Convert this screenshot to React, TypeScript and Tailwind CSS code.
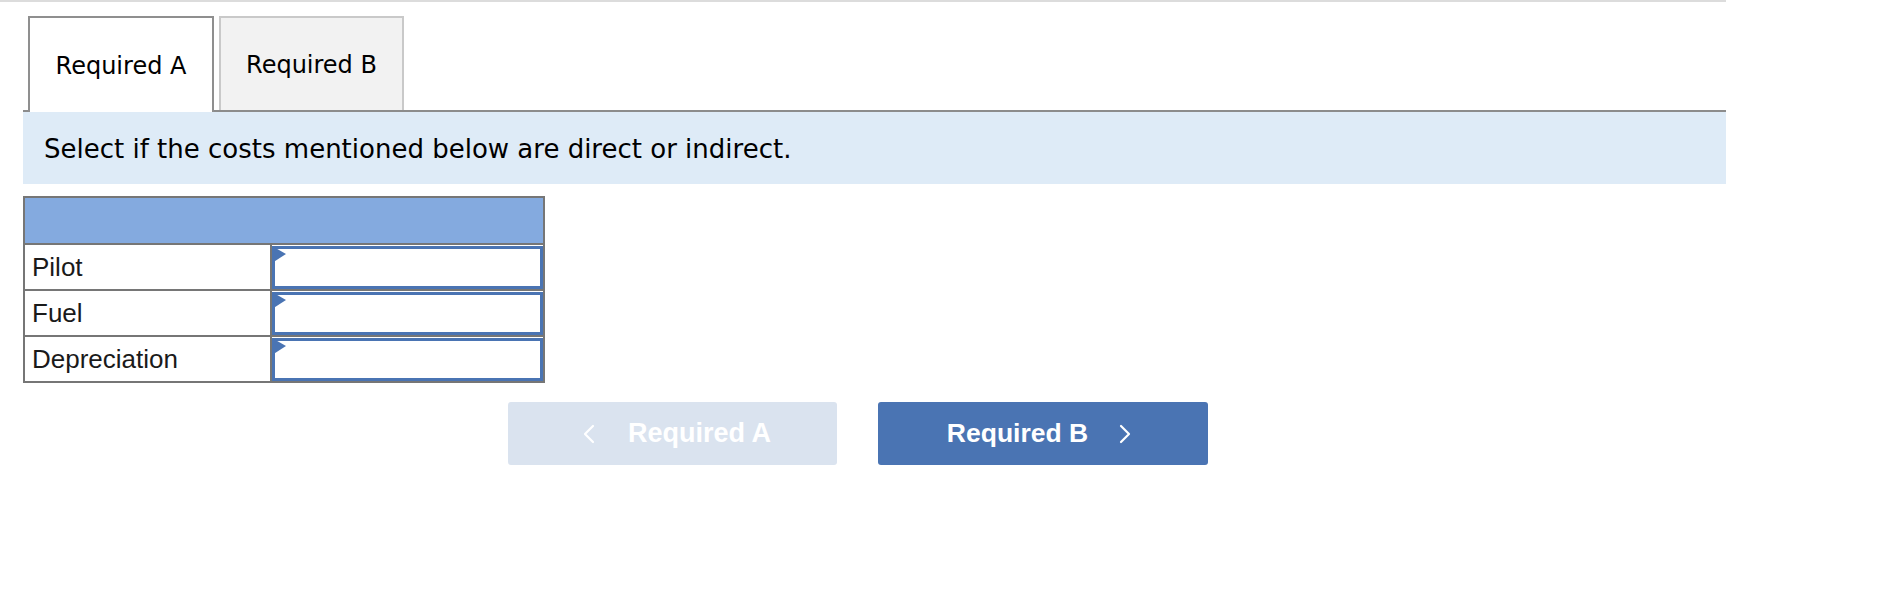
import React from "react";

const rows = ["Pilot", "Fuel", "Depreciation"];

function Chevron({ dir }: { dir: "left" | "right" }) {
  return (
    <svg width="12" height="20" viewBox="0 0 12 20" className="shrink-0">
      <polyline
        points={dir === "left" ? "10,2 2,10 10,18" : "2,2 10,10 2,18"}
        fill="none"
        stroke="white"
        strokeWidth="2.2"
        strokeLinecap="round"
        strokeLinejoin="round"
      />
    </svg>
  );
}

export default function App() {
  return (
    <div className="w-[1884px] h-[604px] bg-white">
      <div className="w-[1726px] border-t-2 border-[#dcdcdc]">
        <div className="pl-[23px]">
          {/* Tabs */}
          <div className="mt-[14px] flex items-end gap-[5px] pl-[5px] border-b-2 border-[#8c8c8c]">
            <div
              className="-mb-[2px] h-[96px] w-[186px] flex items-center justify-center pt-[2px] bg-white border-2 border-b-0 border-[#8f8f8f] text-[24px] text-black"
              style={{ fontFamily: '"DejaVu Sans", Verdana, sans-serif' }}
            >
              Required A
            </div>
            <div
              className="h-[94px] w-[185px] flex items-center justify-center pt-[2px] bg-[#f2f2f2] border-2 border-b-0 border-[#c9c9c9] text-[24px] text-black"
              style={{ fontFamily: '"DejaVu Sans", Verdana, sans-serif' }}
            >
              Required B
            </div>
          </div>

          {/* Banner */}
          <div
            className="h-[72px] flex items-center pl-[21px] pt-[2px] bg-[#deebf7] text-[26px] text-black"
            style={{ fontFamily: '"DejaVu Sans", Verdana, sans-serif' }}
          >
            Select if the costs mentioned below are direct or indirect.
          </div>

          {/* Table */}
          <div
            className="mt-[12px] w-[522px] border-2 border-[#767676]"
            style={{ fontFamily: '"Liberation Sans", Arial, sans-serif' }}
          >
            <div className="h-[45px] bg-[#84aadf]" />
            {rows.map((r) => (
              <div key={r} className="flex h-[46px] border-t-2 border-[#767676]">
                <div className="w-[247px] flex items-center pl-[7px] text-[26px] text-[#1a1a1a] border-r-2 border-[#767676]">
                  {r}
                </div>
                <div className="flex-1 pt-[1px]">
                  <div className="relative h-full w-full border-[3px] border-[#4a74b3] bg-white">
                    <svg
                      width="15"
                      height="18"
                      viewBox="0 0 15 18"
                      className="absolute -left-[3px] -top-[3px]"
                    >
                      <polygon points="0,0 14,8 0,17" fill="#4a74b3" />
                    </svg>
                  </div>
                </div>
              </div>
            ))}
          </div>
        </div>

        {/* Nav buttons */}
        <div
          className="mt-[19px] flex gap-[41px] pl-[508px]"
          style={{ fontFamily: '"Liberation Sans", Arial, sans-serif' }}
        >
          <div className="h-[63px] w-[329px] rounded-[3px] bg-[#dae3ef] flex items-center justify-center gap-[33px] pl-[9px] text-white font-bold text-[27px]">
            <Chevron dir="left" />
            <span>Required A</span>
          </div>
          <div className="h-[63px] w-[330px] rounded-[3px] bg-[#4a74b3] flex items-center justify-center gap-[31px] pr-[8px] text-white font-bold text-[26.5px]">
            <span>Required B</span>
            <Chevron dir="right" />
          </div>
        </div>
      </div>
    </div>
  );
}
